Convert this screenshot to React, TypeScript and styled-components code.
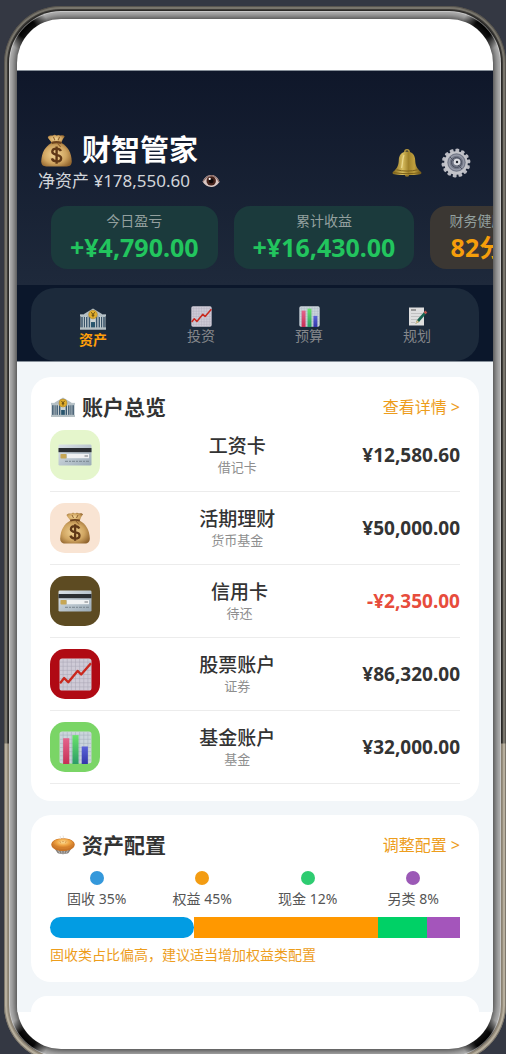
import React from 'react';
import styled, { createGlobalStyle } from 'styled-components';

const GlobalStyle = createGlobalStyle`
  *, *::before, *::after { box-sizing: border-box; }
  body {
    margin: 0;
    background: #343843;
    font-family: "Noto Sans", "Noto Sans CJK SC", sans-serif;
    color: #333;
  }
  h1, h2, h3, p, ul { margin: 0; padding: 0; }
  ul { list-style: none; }
  svg { display: block; flex: none; }
`;

/* ---------- icons ---------- */

type IconProps = { size?: number };

const MoneyBag = ({ size = 32 }: IconProps) => (
  <svg width={size} height={size} viewBox="0 0 32 32" aria-hidden="true">
    <defs>
      <radialGradient id="bagFill" cx="45%" cy="50%" r="62%">
        <stop offset="0" stopColor="#f3d596" />
        <stop offset=".6" stopColor="#d0a561" />
        <stop offset="1" stopColor="#93662f" />
      </radialGradient>
    </defs>
    <path d="M11.5 8.500C5 12 1.500 18 1.200 26.500C1.200 30 3 31.500 6 31.500H26C29 31.500 30.800 30 30.800 26.500C30.500 18 27 12 20.500 8.500Z" fill="url(#bagFill)" />
    <path d="M11.500 9C10 6 8 5 7.500 3C9 1 11 1.500 12.500 1.500C14 0 15 1.500 16 1.500C18 .2 19 1.200 20 1.500C22 .6 23.800 1.500 24 2.500C22 4.500 21.500 7 20.500 9Z" fill="url(#bagFill)" />
    <path d="M11 7.800C14 6.600 18 6.600 21 7.800L20.500 9.600C18 8.600 14 8.600 11.500 9.600Z" fill="#6d431e" />
    <path d="M17 9L20 12.500M13 3L14.500 6M19 3L17.500 6" stroke="#8e6130" strokeWidth="1" fill="none" />
    <path d="M20.300 16.600C19.500 14.900 18 14.200 16 14.200C13.600 14.200 11.900 15.500 11.900 17.300C11.900 21.500 20.500 18.900 20.500 23.400C20.500 25.400 18.700 26.600 16.200 26.600C13.900 26.600 12.100 25.700 11.500 23.700M16.100 12.200V28.800" stroke="#603817" strokeWidth="2.300" fill="none" />
  </svg>
);

const Bell = () => (
  <svg width="30" height="28" viewBox="0 0 30 28" aria-hidden="true">
    <defs>
      <linearGradient id="bellFill">
        <stop offset="0" stopColor="#80651c" />
        <stop offset=".35" stopColor="#d8bd5e" />
        <stop offset=".55" stopColor="#a1832b" />
        <stop offset=".75" stopColor="#bf9f3e" />
        <stop offset="1" stopColor="#6b5216" />
      </linearGradient>
    </defs>
    <circle cx="15" cy="3" r="2.200" fill="none" stroke="#b5973c" strokeWidth="1.500" />
    <circle cx="15" cy="25.500" r="2.300" fill="#94762a" />
    <path d="M15 2.500C9.500 2.500 7 6.500 6.800 11C6.600 16 5.500 19.500 .8 23C.2 24 .6 25 2 25.200C10 26.400 20 26.400 28 25.200C29.400 25 29.800 24 29.200 23C24.500 19.500 23.400 16 23.200 11C23 6.500 20.500 2.500 15 2.500Z" fill="url(#bellFill)" />
    <path d="M4.500 20.800C11 22.500 19 22.500 25.500 20.800M1.500 23.600C10 25 20 25 28.500 23.600" stroke="#7d6119" fill="none" />
    <path d="M12 6C10.500 9 10.700 15 9.500 19" stroke="#f4e4a0" strokeWidth="1.300" fill="none" opacity=".7" />
  </svg>
);

const Gear = () => (
  <svg width="30" height="30" viewBox="0 0 30 30" aria-hidden="true">
    {Array.from({ length: 14 }, (_, i) => (
      <path key={i} d="M13.300 4L13 1.200Q15 -.2 17 1.200L16.700 4Z" fill="#b9bac2" transform={`rotate(${i * 25.7 + 6} 15 15)`} />
    ))}
    <circle cx="15" cy="15" r="11.800" fill="#c3c4ca" />
    <circle cx="15.500" cy="14.500" r="9.200" fill="#747988" />
    <circle cx="15.500" cy="14.500" r="7.400" fill="none" stroke="#9599a7" strokeWidth="1.200" />
    <path d="M9 9L21 21" stroke="#4d5262" strokeWidth="1" />
    <circle cx="15.500" cy="14.500" r="5" fill="none" stroke="#4b5060" strokeWidth="1" />
    <circle cx="16" cy="14" r="3.300" fill="#dadbe0" />
    <circle cx="16" cy="14" r="1.200" fill="#20242e" />
  </svg>
);

const Eye = () => (
  <svg width="18" height="14" viewBox="0 0 18 14" aria-hidden="true">
    <path d="M.5 7.500C3 2.500 6.500 .6 10 1C13.500 1.300 16.500 4.500 17.500 8C14.500 12 12 13 9 13C5.500 13 2.500 10.500 .5 7.500Z" fill="#d9c6c2" />
    <path d="M1 7.500C4 3 7 1.300 10 1.600C13 2 16 5 17 8" fill="none" stroke="#8b6b66" strokeWidth="1.100" />
    <circle cx="9.200" cy="6.900" r="4.700" fill="#46231b" />
    <circle cx="9.200" cy="6.900" r="2.400" fill="#0f0808" />
    <circle cx="7.700" cy="4.900" r="1.100" fill="#fff" />
  </svg>
);

const Bank = ({ size = 26 }: IconProps) => (
  <svg width={size} height={size * 0.85} viewBox="0 0 26 22" aria-hidden="true">
    <path d="M.5 7.500H7V20H.5ZM19 7.500H25.500V20H19Z" fill="#a9b8c0" />
    <path d="M0 6.300H26V8.300H0Z" fill="#b9c4c9" />
    <path d="M2 9V20M4.700 9V20M21.300 9V20M24 9V20" stroke="#3a5368" strokeWidth="1.400" />
    <path d="M13 .4L22 6V8.500H4V6Z" fill="#b4bec3" />
    <path d="M5 8.500H21V20H5Z" fill="#ccd4d5" />
    <path d="M6.700 9V20M9.400 9V20M16.600 9V20M19.300 9V20" stroke="#3b5870" strokeWidth="1.500" />
    <path d="M11 14H15V20H11Z" fill="#28556d" />
    <path d="M0 19.300H26V21.700H0Z" fill="#b5c0c4" />
    <circle cx="13" cy="6.500" r="4.300" fill="#e1ae2d" stroke="#a98127" strokeWidth=".6" />
    <path d="M11.300 4.200L13 6.500L14.700 4.200M13 6.500V9.200M11.600 7.200H14.400" stroke="#584211" strokeWidth=".9" fill="none" />
  </svg>
);

const GridPaper = ({ fill, line }: { fill: string; line: string }) => (
  <>
    <rect x=".5" y=".5" width="31" height="31" rx="2.500" fill={fill} />
    <path d="M4 1V31M8 1V31M12 1V31M16 1V31M20 1V31M24 1V31M28 1V31M1 4H31M1 8H31M1 12H31M1 16H31M1 20H31M1 24H31M1 28H31" stroke={line} strokeWidth=".5" />
  </>
);

const ChartUp = ({ size = 21 }: IconProps) => (
  <svg width={size} height={size} viewBox="0 0 32 32" aria-hidden="true">
    <GridPaper fill="#cfcbd7" line="#aaa5b6" />
    <path d="M1 24.500L5 19.500L9 23.500L18 12.500L21.500 16L31 5" fill="none" stroke="#c9281e" strokeWidth="2.300" strokeLinejoin="round" />
  </svg>
);

const BarChart = ({ size = 21 }: IconProps) => (
  <svg width={size} height={size} viewBox="0 0 32 32" aria-hidden="true">
    <defs>
      <linearGradient id="barRed" x2="0" y2="1"><stop stopColor="#e4648c" /><stop offset="1" stopColor="#c72f55" /></linearGradient>
      <linearGradient id="barGreen" x2="0" y2="1"><stop stopColor="#6ae36c" /><stop offset="1" stopColor="#2b9c66" /></linearGradient>
      <linearGradient id="barBlue" x2="0" y2="1"><stop stopColor="#5a62d8" /><stop offset="1" stopColor="#3437aa" /></linearGradient>
    </defs>
    <GridPaper fill="#cbd5dc" line="#a3afba" />
    <rect x="4" y="7" width="6" height="25" fill="url(#barRed)" />
    <rect x="13" y="4" width="6" height="28" fill="url(#barGreen)" />
    <rect x="22" y="15" width="6" height="17" fill="url(#barBlue)" />
  </svg>
);

const Memo = () => (
  <svg width="21" height="21" viewBox="0 0 21 21" aria-hidden="true">
    <path d="M2 1.500H17V19.500H2Z" fill="#dedede" />
    <path d="M4 4H9" stroke="#555" />
    <path d="M4 7.500H15M4 10.500H13M4 13.500H10M4 16.500H8" stroke="#b4b4b4" strokeWidth=".7" />
    <path d="M8.500 17.800L10 14L17.500 5.500L19.500 7.300L12 16Z" fill="#17624f" />
    <path d="M16.600 6.500L18.300 4.600L20.300 6.400L18.600 8.300Z" fill="#c0544f" />
    <path d="M8.500 17.800L10 14L12 16Z" fill="#dfbf8c" />
  </svg>
);

const BankCard = () => (
  <svg width="34" height="22" viewBox="0 0 34 22" aria-hidden="true">
    <defs>
      <linearGradient id="cardFill" x2="1" y2="1"><stop stopColor="#dce3e8" /><stop offset="1" stopColor="#9babb7" /></linearGradient>
    </defs>
    <rect x=".5" y=".5" width="33" height="21" rx="1.300" fill="url(#cardFill)" />
    <rect x=".5" y="4" width="33" height="4.200" fill="#2b2f33" />
    <rect x="9" y="10" width="22" height="4.200" fill="#f0f2f3" />
    <path d="M26.500 12H30" stroke="#74797d" />
    <rect x="2.500" y="10" width="6" height="4.500" rx=".8" fill="#c7a755" />
    <path d="M7 17.300H31" stroke="#7b8790" strokeDasharray="3 1 2 1" />
  </svg>
);

const Pie = () => (
  <svg width="24" height="20" viewBox="0 0 24 20" aria-hidden="true">
    <defs>
      <radialGradient id="pieFill" cx="50%" cy="35%"><stop stopColor="#fde09a" /><stop offset=".6" stopColor="#f0a543" /><stop offset="1" stopColor="#d4802c" /></radialGradient>
    </defs>
    <path d="M2 11L6.500 18C9 19.500 15 19.500 17.500 18L22 11Z" fill="#85817e" />
    <path d="M7 15L9 18.500M10.500 15L11 19M13.500 15L13 19M17 15L15 18.500" stroke="#c7c4c1" strokeWidth=".8" />
    <path d="M.3 9.500C.3 6 5.500 3.200 12 3.200S23.700 6 23.700 9.500C23.700 13.500 18.500 16 12 16S.3 13.500 .3 9.500Z" fill="#c97527" />
    <ellipse cx="12" cy="8.700" rx="10.800" ry="5.300" fill="url(#pieFill)" />
    <path d="M9.500 7.500L9 6.500M12 7.200V6M14.500 7.500L15 6.500" stroke="#b9702c" strokeWidth=".8" />
    <path d="M9 4Q10 2.500 9 1M12 3.500Q13 2 12 .5" stroke="#e6e3df" fill="none" />
  </svg>
);

/* ---------- device ---------- */

const Page = styled.div`
  min-height: 100vh;
  overflow: hidden;
  background: #343843;
`;

/* The lower part of the outer rim is champagne, the upper part graphite. */
const Phone = styled.div`
  margin: 6px 0 -8px 4px;
  padding: 5px;
  border-radius: 57px;
  background: linear-gradient(#2b2a28 calc(100% - 319px), #8f8676 calc(100% - 318px));
  box-shadow:
    inset 0 0 0 1px rgba(40, 38, 36, 0.4),
    inset 0 0 0 3px rgba(255, 248, 230, 0.3),
    inset 0 0 0 4px rgba(255, 248, 230, 0.1);
`;

const Bezel = styled.div`
  padding: 8px;
  border-radius: 52px;
  background:
    radial-gradient(circle at 18px 18px, #000 9px, transparent 22px),
    radial-gradient(circle at calc(100% - 18px) 18px, #000 9px, transparent 22px),
    radial-gradient(circle at 18px calc(100% - 18px), #000 9px, transparent 22px),
    radial-gradient(circle at calc(100% - 18px) calc(100% - 18px), #000 9px, transparent 22px),
    #b8b8b8;
  box-shadow: inset 0 0 0 1px rgba(235, 235, 235, 0.5);
`;

const Screen = styled.div`
  overflow: hidden;
  border-radius: 44px;
  background: #fff;
  box-shadow: 0 0 8px 1px #222;
`;

const StatusArea = styled.div`
  height: 52px;
  border-bottom: 1px solid #87909a;
`;

const HomeArea = styled.div`
  height: 37px;
`;

/* ---------- header ---------- */

const Header = styled.header`
  padding: 61px 0 16px;
  background: linear-gradient(#0f172a, #1e293b);
`;

const HeaderTop = styled.div`
  display: flex;
  align-items: center;
  justify-content: space-between;
  padding: 0 22px 0 21px;
`;

const AppTitle = styled.h1`
  display: flex;
  align-items: center;
  gap: 9px;
  padding-left: 2px;
  font-size: 29px;
  line-height: 36px;
  color: #fff;
`;

const NetWorth = styled.p`
  display: flex;
  align-items: center;
  gap: 12px;
  font-size: 17px;
  line-height: 26px;
  color: #d2d5da;
`;

const IconButton = styled.button`
  padding: 0;
  border: 0;
  background: none;
  cursor: pointer;
`;

const Actions = styled.div`
  display: flex;
  align-items: center;
  gap: 19px;
`;

const Stats = styled.ul`
  display: flex;
  gap: 16px;
  margin-top: 12px;
  padding-left: 34px;
  overflow: hidden;
`;

const Stat = styled.li<{ $tone: 'gain' | 'score' }>`
  flex: none;
  padding: 5px 19px 6px;
  border-radius: 16px;
  text-align: center;
  background: ${(p) => (p.$tone === 'gain' ? '#1b3a3c' : '#3b3733')};
  color: ${(p) => (p.$tone === 'gain' ? '#22c55e' : '#f59e0b')};
`;

const StatLabel = styled.p`
  font-size: 14px;
  line-height: 20px;
  color: #93a09f;
`;

const StatValue = styled.p`
  font-size: 25px;
  font-weight: 700;
  line-height: 32px;
`;

/* ---------- tabs ---------- */

const TabStrip = styled.nav`
  padding: 3px 14px 0;
  background: #0b172b;
  border-bottom: 1px solid #87909a;
`;

const TabList = styled.div`
  display: grid;
  grid-template-columns: repeat(4, 1fr);
  height: 73px;
  padding: 0 8px;
  border-radius: 24px;
  background: #1c2a3b;
`;

const Tab = styled.button<{ $active?: boolean }>`
  display: flex;
  flex-direction: column;
  align-items: center;
  justify-content: center;
  padding: ${(p) => (p.$active ? '8px' : '2px')} 0 0;
  border: 0;
  background: none;
  font: inherit;
  font-size: 14px;
  line-height: 18px;
  font-weight: ${(p) => (p.$active ? 700 : 400)};
  color: ${(p) => (p.$active ? '#ff9f0a' : '#85878b')};
  cursor: pointer;
`;

/* ---------- cards ---------- */

const Content = styled.main`
  display: flex;
  flex-direction: column;
  gap: 14px;
  padding: 15px 14px 0;
  background: #f2f6f9;
`;

const Card = styled.section`
  padding: 18px 19px 17px;
  border-radius: 20px;
  background: #fff;
`;

const NextCard = styled.div`
  height: 16px;
  border-radius: 20px 20px 0 0;
  background: #fff;
`;

const CardHeader = styled.div`
  display: flex;
  align-items: center;
  justify-content: space-between;
  height: 24px;
`;

const CardTitle = styled.h2`
  display: flex;
  align-items: center;
  gap: 7px;
  padding-left: 1px;
  font-size: 21px;
  line-height: 24px;
`;

const CardLink = styled.a`
  font-size: 16px;
  line-height: 24px;
  color: #ed9d1c;
  text-decoration: none;
`;

const Account = styled.li`
  display: flex;
  align-items: center;
  padding: 11px 0;
  border-bottom: 1px solid #ececec;
`;

const AccountIcon = styled.div<{ $color: string }>`
  display: grid;
  place-items: center;
  flex: none;
  width: 50px;
  height: 50px;
  border-radius: 15px;
  background: ${(p) => p.$color};
`;

const AccountText = styled.div`
  flex: 1;
  padding-left: 12px;
  text-align: center;
`;

const AccountName = styled.h3`
  font-size: 19px;
  font-weight: 500;
  line-height: 24px;
`;

const AccountKind = styled.p`
  font-size: 13px;
  line-height: 18px;
  color: #8e8e8e;
`;

const Amount = styled.p<{ $negative: boolean }>`
  font-size: 19px;
  font-weight: 700;
  color: ${(p) => (p.$negative ? '#e74c3c' : '#333')};
`;

const Legend = styled.ul`
  display: grid;
  grid-template-columns: repeat(4, 1fr);
  margin: 14px -6px 0;
`;

const LegendItem = styled.li`
  display: flex;
  flex-direction: column;
  align-items: center;
  gap: 4px;
  font-size: 14px;
  line-height: 20px;
  color: #555;
`;

const Dot = styled.span<{ $color: string }>`
  width: 14px;
  height: 14px;
  border-radius: 50%;
  background: ${(p) => p.$color};
`;

const Bar = styled.div`
  display: flex;
  height: 21px;
  margin-top: 8px;
`;

const Segment = styled.div<{ $share: number; $color: string; $round: boolean }>`
  flex: ${(p) => p.$share} 0 0;
  border-radius: ${(p) => (p.$round ? '11px' : '0')};
  background: ${(p) => p.$color};
`;

const Note = styled.p`
  margin-top: 7px;
  font-size: 14px;
  line-height: 20px;
  color: #ed9d1c;
`;

/* ---------- data ---------- */

const stats = [
  { label: '今日盈亏', value: '+¥4,790.00', tone: 'gain' as const },
  { label: '累计收益', value: '+¥16,430.00', tone: 'gain' as const },
  { label: '财务健康', value: '82分', tone: 'score' as const },
];

const tabs = [
  { label: '资产', icon: <Bank />, active: true },
  { label: '投资', icon: <ChartUp /> },
  { label: '预算', icon: <BarChart /> },
  { label: '规划', icon: <Memo /> },
];

const accounts = [
  { name: '工资卡', kind: '借记卡', amount: '¥12,580.60', color: '#e5f6cc', icon: <BankCard /> },
  { name: '活期理财', kind: '货币基金', amount: '¥50,000.00', color: '#f9e4d3', icon: <MoneyBag size={32} /> },
  { name: '信用卡', kind: '待还', amount: '-¥2,350.00', color: '#5d4b22', icon: <BankCard /> },
  { name: '股票账户', kind: '证券', amount: '¥86,320.00', color: '#b00a14', icon: <ChartUp size={33} /> },
  { name: '基金账户', kind: '基金', amount: '¥32,000.00', color: '#7ad566', icon: <BarChart size={33} /> },
];

const allocation = [
  { name: '固收', share: 35, dot: '#3498db', bar: '#029ce3' },
  { name: '权益', share: 45, dot: '#f39c12', bar: '#ff9800' },
  { name: '现金', share: 12, dot: '#2ecc71', bar: '#00d166' },
  { name: '另类', share: 8, dot: '#9b59b6', bar: '#a455bb' },
];

export default function App() {
  return (
    <Page>
      <GlobalStyle />
      <Phone>
        <Bezel>
          <Screen>
            <StatusArea />
            <Header>
              <HeaderTop>
                <div>
                  <AppTitle><MoneyBag size={33} />财智管家</AppTitle>
                  <NetWorth>
                    净资产 ¥178,550.60
                    <IconButton type="button" aria-label="隐藏金额"><Eye /></IconButton>
                  </NetWorth>
                </div>
                <Actions>
                  <IconButton type="button" aria-label="通知"><Bell /></IconButton>
                  <IconButton type="button" aria-label="设置"><Gear /></IconButton>
                </Actions>
              </HeaderTop>
              <Stats>
                {stats.map((s) => (
                  <Stat key={s.label} $tone={s.tone}>
                    <StatLabel>{s.label}</StatLabel>
                    <StatValue>{s.value}</StatValue>
                  </Stat>
                ))}
              </Stats>
            </Header>

            <TabStrip>
              <TabList>
                {tabs.map((t) => (
                  <Tab key={t.label} type="button" $active={t.active} aria-current={t.active ? 'page' : undefined}>
                    {t.icon}
                    {t.label}
                  </Tab>
                ))}
              </TabList>
            </TabStrip>

            <Content>
              <Card>
                <CardHeader>
                  <CardTitle><Bank size={24} />账户总览</CardTitle>
                  <CardLink href="#accounts">查看详情 &gt;</CardLink>
                </CardHeader>
                <ul>
                  {accounts.map((a) => (
                    <Account key={a.name}>
                      <AccountIcon $color={a.color}>{a.icon}</AccountIcon>
                      <AccountText>
                        <AccountName>{a.name}</AccountName>
                        <AccountKind>{a.kind}</AccountKind>
                      </AccountText>
                      <Amount $negative={a.amount.startsWith('-')}>{a.amount}</Amount>
                    </Account>
                  ))}
                </ul>
              </Card>

              <Card>
                <CardHeader>
                  <CardTitle><Pie />资产配置</CardTitle>
                  <CardLink href="#allocation">调整配置 &gt;</CardLink>
                </CardHeader>
                <Legend>
                  {allocation.map((a) => (
                    <LegendItem key={a.name}>
                      <Dot $color={a.dot} />
                      {a.name} {a.share}%
                    </LegendItem>
                  ))}
                </Legend>
                <Bar>
                  {allocation.map((a, i) => (
                    <Segment key={a.name} $share={a.share} $color={a.bar} $round={i === 0} />
                  ))}
                </Bar>
                <Note>固收类占比偏高，建议适当增加权益类配置</Note>
              </Card>

              <NextCard />
            </Content>
            <HomeArea />
          </Screen>
        </Bezel>
      </Phone>
    </Page>
  );
}
